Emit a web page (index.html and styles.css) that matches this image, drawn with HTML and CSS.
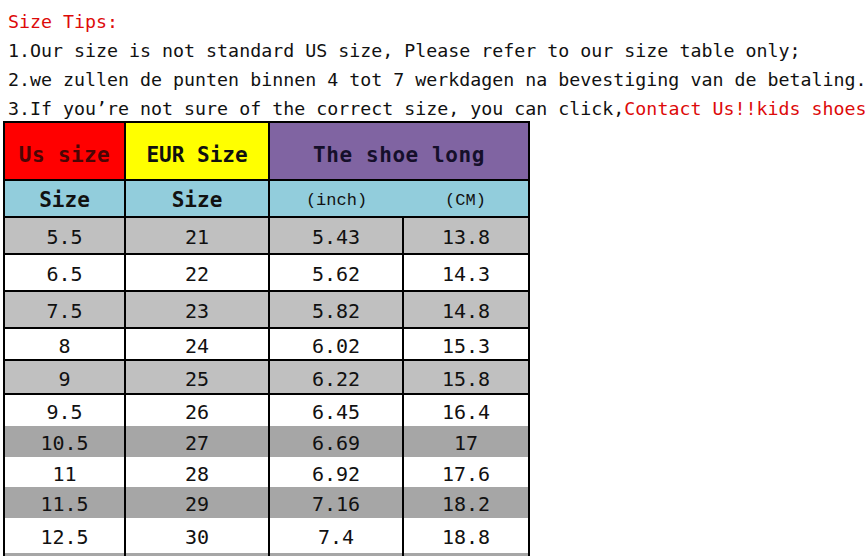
FILE: index.html
```html
<!DOCTYPE html>
<html>
<head>
<meta charset="utf-8">
<link rel="stylesheet" href="styles.css">
</head>
<body>
<div class="tips">
  <div class="line red">Size Tips:</div>
  <div class="line">1.Our size is not standard US size, Please refer to our size table only;</div>
  <div class="line">2.we zullen de punten binnen 4 tot 7 werkdagen na bevestiging van de betaling.</div>
  <div class="line last">3.If you’re not sure of the correct size, you can click,<span class="red">Contact Us!!kids shoes</span></div>
</div>
<table class="sizes">
  <colgroup><col class="c1"><col class="c2"><col class="c3"><col class="c4"></colgroup>
  <tr class="head">
    <th class="us">Us size</th>
    <th class="eur">EUR Size</th>
    <th class="long" colspan="2">The shoe long</th>
  </tr>
  <tr class="sub">
    <th>Size</th>
    <th>Size</th>
    <th class="unit inch">(inch)</th>
    <th class="unit cm">(CM)</th>
  </tr>
  <tr class="b37 g1"><td>5.5</td><td>21</td><td>5.43</td><td>13.8</td></tr>
  <tr class="b37 w"><td>6.5</td><td>22</td><td>5.62</td><td>14.3</td></tr>
  <tr class="b37 g1"><td>7.5</td><td>23</td><td>5.82</td><td>14.8</td></tr>
  <tr class="b32 w"><td>8</td><td>24</td><td>6.02</td><td>15.3</td></tr>
  <tr class="b34 g1"><td>9</td><td>25</td><td>6.22</td><td>15.8</td></tr>
  <tr class="b33 w nob"><td>9.5</td><td>26</td><td>6.45</td><td>16.4</td></tr>
  <tr class="n31 g2 nob"><td>10.5</td><td>27</td><td>6.69</td><td>17</td></tr>
  <tr class="n30 w nob"><td>11</td><td>28</td><td>6.92</td><td>17.6</td></tr>
  <tr class="n31 g2 nob"><td>11.5</td><td>29</td><td>7.16</td><td>18.2</td></tr>
  <tr class="n35 w nob"><td>12.5</td><td>30</td><td>7.4</td><td>18.8</td></tr>
  <tr class="stub g2 nob"><td></td><td></td><td></td><td></td></tr>
</table>
</body>
</html>
```
FILE: styles.css
```css
html, body {
  margin: 0;
  padding: 0;
  background: #ffffff;
}
body {
  overflow: hidden;
  height: 557px;
}
.tips {
  padding: 7px 0 0 8px;
  font-family: "DejaVu Sans Mono", "Liberation Mono", monospace;
  font-size: 18.3px;
  color: #111111;
  white-space: nowrap;
}
.line {
  height: 29px;
  line-height: 29px;
}
.line.last {
  height: 27px;
}
.red {
  color: #dd0a0a;
}
.sizes {
  margin-left: 3px;
  border-collapse: collapse;
  table-layout: fixed;
  width: 527px;
  font-family: "DejaVu Sans Mono", "Liberation Mono", monospace;
  color: #111111;
}
.c1 { width: 121px; }
.c2 { width: 144px; }
.c3 { width: 134px; }
.c4 { width: 126px; }
.sizes th, .sizes td {
  border: 2px solid #000000;
  padding: 0;
  text-align: center;
  vertical-align: middle;
  white-space: nowrap;
  overflow: hidden;
}
.head th {
  height: 49px;
  padding-top: 7px;
  font-size: 21px;
  font-weight: bold;
}
.us {
  background: #ff0000;
  color: #4a0505;
  letter-spacing: 0.4px;
}
.eur {
  background: #ffff00;
  color: #101010;
}
.long {
  background: #8064a2;
  color: #150f2a;
  letter-spacing: 0.6px;
}
.sub th {
  height: 32px;
  padding-top: 3px;
  background: #92cddc;
  font-size: 21px;
  font-weight: bold;
  color: #111111;
}
.sub .unit {
  font-family: "Liberation Mono", monospace;
  font-size: 17px;
  font-weight: normal;
}
.sub .inch { border-right: none; }
.sub .cm { border-left: none; }
.sizes td {
  font-size: 20px;
  padding-top: 3px;
}
.b37 td { height: 32px; }
.b34 td { height: 29px; }
.b33 td { height: 28px; }
.b32 td { height: 27px; }
.n35 td { height: 32px; }
.n31 td { height: 28px; }
.n30 td { height: 27px; }
.stub td {
  height: 3px;
  padding: 0;
  font-size: 0;
  line-height: 0;
}
.g1 td { background: #c0c0c0; }
.g2 td { background: #a6a6a6; }
.w td { background: #ffffff; }
.nob td {
  border-bottom: none;
}
.nob + .nob td {
  border-top: none;
}
```
